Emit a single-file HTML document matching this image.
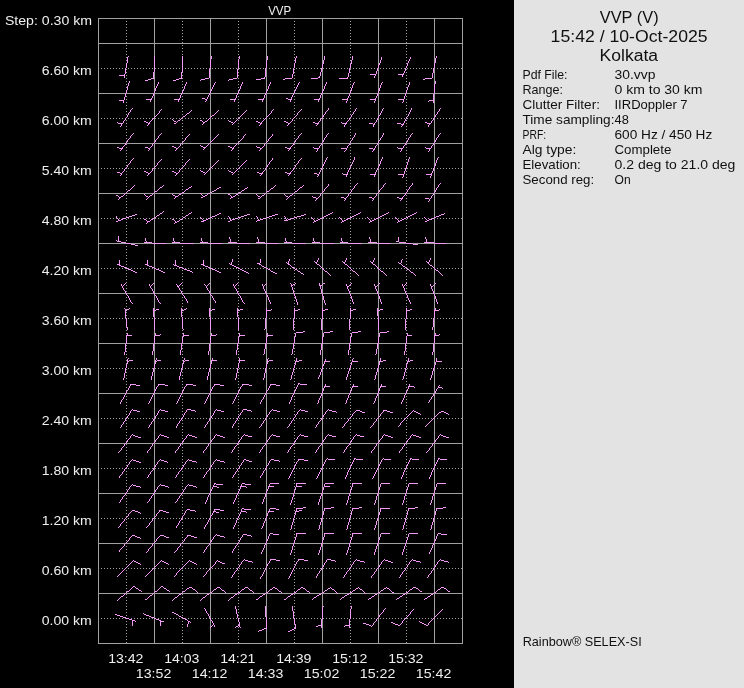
<!DOCTYPE html><html><head><meta charset="utf-8"><style>html,body{margin:0;padding:0;background:#000;width:744px;height:688px;overflow:hidden}svg{display:block;will-change:transform}text{font-family:"Liberation Sans",sans-serif}</style></head><body>
<svg width="744" height="688" viewBox="0 0 744 688">
<rect x="0" y="0" width="744" height="688" fill="#000"/>
<rect x="514" y="0" width="230" height="688" fill="#e3e3e3"/>
<g shape-rendering="crispEdges"><line x1="101" y1="68.5" x2="462" y2="68.5" stroke="#a0a0a0" stroke-width="1" stroke-dasharray="1 2"/><line x1="101" y1="118.5" x2="462" y2="118.5" stroke="#a0a0a0" stroke-width="1" stroke-dasharray="1 2"/><line x1="101" y1="168.5" x2="462" y2="168.5" stroke="#a0a0a0" stroke-width="1" stroke-dasharray="1 2"/><line x1="101" y1="218.5" x2="462" y2="218.5" stroke="#a0a0a0" stroke-width="1" stroke-dasharray="1 2"/><line x1="101" y1="268.5" x2="462" y2="268.5" stroke="#a0a0a0" stroke-width="1" stroke-dasharray="1 2"/><line x1="101" y1="318.5" x2="462" y2="318.5" stroke="#a0a0a0" stroke-width="1" stroke-dasharray="1 2"/><line x1="101" y1="368.5" x2="462" y2="368.5" stroke="#a0a0a0" stroke-width="1" stroke-dasharray="1 2"/><line x1="101" y1="418.5" x2="462" y2="418.5" stroke="#a0a0a0" stroke-width="1" stroke-dasharray="1 2"/><line x1="101" y1="468.5" x2="462" y2="468.5" stroke="#a0a0a0" stroke-width="1" stroke-dasharray="1 2"/><line x1="101" y1="518.5" x2="462" y2="518.5" stroke="#a0a0a0" stroke-width="1" stroke-dasharray="1 2"/><line x1="101" y1="568.5" x2="462" y2="568.5" stroke="#a0a0a0" stroke-width="1" stroke-dasharray="1 2"/><line x1="101" y1="618.5" x2="462" y2="618.5" stroke="#a0a0a0" stroke-width="1" stroke-dasharray="1 2"/><line x1="126.5" y1="21" x2="126.5" y2="643" stroke="#a0a0a0" stroke-width="1" stroke-dasharray="1 2"/><line x1="182.5" y1="21" x2="182.5" y2="643" stroke="#a0a0a0" stroke-width="1" stroke-dasharray="1 2"/><line x1="238.5" y1="21" x2="238.5" y2="643" stroke="#a0a0a0" stroke-width="1" stroke-dasharray="1 2"/><line x1="294.5" y1="21" x2="294.5" y2="643" stroke="#a0a0a0" stroke-width="1" stroke-dasharray="1 2"/><line x1="350.5" y1="21" x2="350.5" y2="643" stroke="#a0a0a0" stroke-width="1" stroke-dasharray="1 2"/><line x1="406.5" y1="21" x2="406.5" y2="643" stroke="#a0a0a0" stroke-width="1" stroke-dasharray="1 2"/><line x1="98" y1="43.5" x2="463" y2="43.5" stroke="#a0a0a0" stroke-width="1"/><line x1="98" y1="93.5" x2="463" y2="93.5" stroke="#a0a0a0" stroke-width="1"/><line x1="98" y1="143.5" x2="463" y2="143.5" stroke="#a0a0a0" stroke-width="1"/><line x1="98" y1="193.5" x2="463" y2="193.5" stroke="#a0a0a0" stroke-width="1"/><line x1="98" y1="243.5" x2="463" y2="243.5" stroke="#a0a0a0" stroke-width="1"/><line x1="98" y1="293.5" x2="463" y2="293.5" stroke="#a0a0a0" stroke-width="1"/><line x1="98" y1="343.5" x2="463" y2="343.5" stroke="#a0a0a0" stroke-width="1"/><line x1="98" y1="393.5" x2="463" y2="393.5" stroke="#a0a0a0" stroke-width="1"/><line x1="98" y1="443.5" x2="463" y2="443.5" stroke="#a0a0a0" stroke-width="1"/><line x1="98" y1="493.5" x2="463" y2="493.5" stroke="#a0a0a0" stroke-width="1"/><line x1="98" y1="543.5" x2="463" y2="543.5" stroke="#a0a0a0" stroke-width="1"/><line x1="98" y1="593.5" x2="463" y2="593.5" stroke="#a0a0a0" stroke-width="1"/><line x1="154.5" y1="18" x2="154.5" y2="643" stroke="#a0a0a0" stroke-width="1"/><line x1="210.5" y1="18" x2="210.5" y2="643" stroke="#a0a0a0" stroke-width="1"/><line x1="266.5" y1="18" x2="266.5" y2="643" stroke="#a0a0a0" stroke-width="1"/><line x1="322.5" y1="18" x2="322.5" y2="643" stroke="#a0a0a0" stroke-width="1"/><line x1="378.5" y1="18" x2="378.5" y2="643" stroke="#a0a0a0" stroke-width="1"/><line x1="434.5" y1="18" x2="434.5" y2="643" stroke="#a0a0a0" stroke-width="1"/><rect x="98.5" y="18.5" width="364" height="625" fill="none" stroke="#a0a0a0" stroke-width="1"/></g>
<text x="268.2" y="14.5" font-size="12.7" fill="#f0f0f0" textLength="23" lengthAdjust="spacingAndGlyphs" text-anchor="start">VVP</text><text x="4.9" y="25.1" font-size="12.7" fill="#f0f0f0" textLength="87.2" lengthAdjust="spacingAndGlyphs" text-anchor="start">Step: 0.30 km</text><text x="91.7" y="74.9" font-size="12.7" fill="#f0f0f0" textLength="50" lengthAdjust="spacingAndGlyphs" text-anchor="end">6.60 km</text><text x="91.7" y="124.9" font-size="12.7" fill="#f0f0f0" textLength="50" lengthAdjust="spacingAndGlyphs" text-anchor="end">6.00 km</text><text x="91.7" y="174.9" font-size="12.7" fill="#f0f0f0" textLength="50" lengthAdjust="spacingAndGlyphs" text-anchor="end">5.40 km</text><text x="91.7" y="224.9" font-size="12.7" fill="#f0f0f0" textLength="50" lengthAdjust="spacingAndGlyphs" text-anchor="end">4.80 km</text><text x="91.7" y="274.9" font-size="12.7" fill="#f0f0f0" textLength="50" lengthAdjust="spacingAndGlyphs" text-anchor="end">4.20 km</text><text x="91.7" y="324.9" font-size="12.7" fill="#f0f0f0" textLength="50" lengthAdjust="spacingAndGlyphs" text-anchor="end">3.60 km</text><text x="91.7" y="374.9" font-size="12.7" fill="#f0f0f0" textLength="50" lengthAdjust="spacingAndGlyphs" text-anchor="end">3.00 km</text><text x="91.7" y="424.9" font-size="12.7" fill="#f0f0f0" textLength="50" lengthAdjust="spacingAndGlyphs" text-anchor="end">2.40 km</text><text x="91.7" y="474.9" font-size="12.7" fill="#f0f0f0" textLength="50" lengthAdjust="spacingAndGlyphs" text-anchor="end">1.80 km</text><text x="91.7" y="524.9" font-size="12.7" fill="#f0f0f0" textLength="50" lengthAdjust="spacingAndGlyphs" text-anchor="end">1.20 km</text><text x="91.7" y="574.9" font-size="12.7" fill="#f0f0f0" textLength="50" lengthAdjust="spacingAndGlyphs" text-anchor="end">0.60 km</text><text x="91.7" y="624.9" font-size="12.7" fill="#f0f0f0" textLength="50" lengthAdjust="spacingAndGlyphs" text-anchor="end">0.00 km</text><text x="125.8" y="662.9" font-size="12.7" fill="#f0f0f0" textLength="35.3" lengthAdjust="spacingAndGlyphs" text-anchor="middle">13:42</text><text x="181.8" y="662.9" font-size="12.7" fill="#f0f0f0" textLength="35.3" lengthAdjust="spacingAndGlyphs" text-anchor="middle">14:03</text><text x="237.8" y="662.9" font-size="12.7" fill="#f0f0f0" textLength="35.3" lengthAdjust="spacingAndGlyphs" text-anchor="middle">14:21</text><text x="293.8" y="662.9" font-size="12.7" fill="#f0f0f0" textLength="35.3" lengthAdjust="spacingAndGlyphs" text-anchor="middle">14:39</text><text x="349.8" y="662.9" font-size="12.7" fill="#f0f0f0" textLength="35.3" lengthAdjust="spacingAndGlyphs" text-anchor="middle">15:12</text><text x="405.8" y="662.9" font-size="12.7" fill="#f0f0f0" textLength="35.3" lengthAdjust="spacingAndGlyphs" text-anchor="middle">15:32</text><text x="153.6" y="677.7" font-size="12.7" fill="#f0f0f0" textLength="35.5" lengthAdjust="spacingAndGlyphs" text-anchor="middle">13:52</text><text x="209.6" y="677.7" font-size="12.7" fill="#f0f0f0" textLength="35.5" lengthAdjust="spacingAndGlyphs" text-anchor="middle">14:12</text><text x="265.6" y="677.7" font-size="12.7" fill="#f0f0f0" textLength="35.5" lengthAdjust="spacingAndGlyphs" text-anchor="middle">14:33</text><text x="321.6" y="677.7" font-size="12.7" fill="#f0f0f0" textLength="35.5" lengthAdjust="spacingAndGlyphs" text-anchor="middle">15:02</text><text x="377.6" y="677.7" font-size="12.7" fill="#f0f0f0" textLength="35.5" lengthAdjust="spacingAndGlyphs" text-anchor="middle">15:22</text><text x="433.6" y="677.7" font-size="12.7" fill="#f0f0f0" textLength="35.5" lengthAdjust="spacingAndGlyphs" text-anchor="middle">15:42</text><text x="629.2" y="22.9" font-size="15.6" fill="#101010" textLength="58.8" lengthAdjust="spacingAndGlyphs" text-anchor="middle">VVP (V)</text><text x="629.1" y="41.8" font-size="15.6" fill="#101010" textLength="157" lengthAdjust="spacingAndGlyphs" text-anchor="middle">15:42 / 10-Oct-2025</text><text x="628.8" y="60.5" font-size="15.6" fill="#101010" textLength="58.5" lengthAdjust="spacingAndGlyphs" text-anchor="middle">Kolkata</text><text x="522.5" y="79" font-size="12.7" fill="#101010" textLength="45.0" lengthAdjust="spacingAndGlyphs" text-anchor="start">Pdf File:</text><text x="614.5" y="79" font-size="12.7" fill="#101010" textLength="40.9" lengthAdjust="spacingAndGlyphs" text-anchor="start">30.vvp</text><text x="522.5" y="94" font-size="12.7" fill="#101010" textLength="40.6" lengthAdjust="spacingAndGlyphs" text-anchor="start">Range:</text><text x="614.5" y="94" font-size="12.7" fill="#101010" textLength="88.0" lengthAdjust="spacingAndGlyphs" text-anchor="start">0 km to 30 km</text><text x="522.5" y="109" font-size="12.7" fill="#101010" textLength="77.4" lengthAdjust="spacingAndGlyphs" text-anchor="start">Clutter Filter:</text><text x="614.5" y="109" font-size="12.7" fill="#101010" textLength="73.1" lengthAdjust="spacingAndGlyphs" text-anchor="start">IIRDoppler 7</text><text x="522.5" y="124" font-size="12.7" fill="#101010" textLength="92.0" lengthAdjust="spacingAndGlyphs" text-anchor="start">Time sampling:</text><text x="614.5" y="124" font-size="12.7" fill="#101010" textLength="14.3" lengthAdjust="spacingAndGlyphs" text-anchor="start">48</text><text x="522.5" y="139" font-size="12.7" fill="#101010" textLength="23.6" lengthAdjust="spacingAndGlyphs" text-anchor="start">PRF:</text><text x="614.5" y="139" font-size="12.7" fill="#101010" textLength="97.8" lengthAdjust="spacingAndGlyphs" text-anchor="start">600 Hz / 450 Hz</text><text x="522.5" y="154" font-size="12.7" fill="#101010" textLength="53.8" lengthAdjust="spacingAndGlyphs" text-anchor="start">Alg type:</text><text x="614.5" y="154" font-size="12.7" fill="#101010" textLength="56.8" lengthAdjust="spacingAndGlyphs" text-anchor="start">Complete</text><text x="522.5" y="169" font-size="12.7" fill="#101010" textLength="58.3" lengthAdjust="spacingAndGlyphs" text-anchor="start">Elevation:</text><text x="614.5" y="169" font-size="12.7" fill="#101010" textLength="120.9" lengthAdjust="spacingAndGlyphs" text-anchor="start">0.2 deg to 21.0 deg</text><text x="522.5" y="184" font-size="12.7" fill="#101010" textLength="71.7" lengthAdjust="spacingAndGlyphs" text-anchor="start">Second reg:</text><text x="614.5" y="184" font-size="12.7" fill="#101010" textLength="16.1" lengthAdjust="spacingAndGlyphs" text-anchor="start">On</text><text x="522.7" y="646.3" font-size="12.7" fill="#101010" textLength="119" lengthAdjust="spacingAndGlyphs" text-anchor="start">Rainbow® SELEX-SI</text>
<path d="M128.2 56.1L124.3 78.1M124.8 75.1l-5.4 0.8M154.3 56.0L153.9 78.2M153.9 78.2l-8.6 2.6M182.3 56.0L181.9 78.2M181.9 78.2l-8.6 2.6M211.3 56.0L209.0 78.2M209.0 78.2l-8.8 1.9M239.3 56.0L237.0 78.2M237.0 78.2l-8.8 1.9M267.5 56.0L264.8 78.2M264.8 78.2l-8.8 1.7M296.3 56.2L292.2 78.1M292.2 78.1l-8.9 1.2M325.0 56.3L319.6 77.9M319.6 77.9l-9.0 0.6M352.8 56.3L347.8 78.0M347.8 78.0l-9.0 0.8M382.2 56.7L374.6 77.6M375.6 74.8l-5.5 -0.2M410.8 56.9L402.1 77.4M403.2 74.7l-5.5 -0.5M436.4 56.2L432.1 78.1M432.1 78.1l-8.9 1.1M129.4 81.4L123.2 102.9M124.1 100.0l-5.5 0.2M158.8 81.9L150.1 102.4M151.2 99.7l-5.5 -0.5M187.0 82.0L177.9 102.4M179.1 99.6l-5.5 -0.6M215.4 82.2L205.6 102.2M206.9 99.5l-5.4 -0.8M243.0 82.0L233.9 102.4M235.1 99.6l-5.5 -0.6M271.0 82.0L261.9 102.4M263.1 99.6l-5.5 -0.6M299.3 82.1L289.7 102.3M291.0 99.5l-5.5 -0.7M327.0 82.0L317.9 102.4M319.1 99.6l-5.5 -0.6M354.4 81.8L346.4 102.6M347.5 99.8l-5.5 -0.3M382.4 81.8L374.4 102.6M375.5 99.8l-5.5 -0.3M410.1 81.6L402.6 102.7M403.6 99.8l-5.5 -0.1M435.3 81.0L433.0 103.2M433.3 100.2l-5.4 1.1M132.6 107.9L120.5 126.6M122.1 124.1l-5.3 -1.4M162.1 109.1L147.2 125.6M149.2 123.4l-5.0 -2.2M191.6 110.6L174.0 124.3M176.4 122.5l-4.6 -3.1M219.2 110.1L202.4 124.7M204.6 122.8l-4.7 -2.8M246.6 109.5L230.8 125.3M233.0 123.1l-4.9 -2.5M274.1 109.1L259.2 125.6M261.2 123.4l-5.0 -2.2M301.8 108.8L287.5 125.9M289.4 123.6l-5.1 -2.1M329.1 108.2L316.1 126.3M317.9 123.9l-5.2 -1.7M356.8 108.0L344.3 126.5M346.0 124.0l-5.3 -1.5M384.1 107.6L372.9 126.9M374.4 124.3l-5.4 -1.1M411.9 107.5L401.1 127.0M402.6 124.3l-5.4 -1.0M440.9 108.1L428.3 126.5M430.0 124.0l-5.3 -1.6M133.2 133.3L120.1 151.3M121.8 148.9l-5.2 -1.7M161.3 133.4L147.9 151.2M149.7 148.8l-5.2 -1.8M189.8 133.8L175.5 150.9M177.4 148.6l-5.1 -2.1M218.5 134.3L203.0 150.4M205.0 148.2l-4.9 -2.4M246.1 134.1L231.2 150.6M233.2 148.4l-5.0 -2.2M273.7 133.6L259.6 151.0M261.5 148.6l-5.1 -2.0M301.2 133.3L288.1 151.3M289.8 148.9l-5.2 -1.7M328.6 132.9L316.5 151.6M318.1 149.1l-5.3 -1.4M356.4 132.7L344.7 151.8M346.3 149.2l-5.4 -1.3M384.3 132.7L372.8 151.8M374.3 149.2l-5.4 -1.2M412.6 132.9L400.5 151.6M402.1 149.1l-5.3 -1.4M440.6 132.9L428.5 151.6M430.1 149.1l-5.3 -1.4M133.3 158.4L119.9 176.2M121.7 173.8l-5.2 -1.8M161.8 158.8L147.5 175.9M149.4 173.6l-5.1 -2.1M190.0 158.9L175.4 175.7M177.3 173.5l-5.1 -2.1M218.6 159.5L202.8 175.3M205.0 173.1l-4.9 -2.5M246.6 159.5L230.8 175.3M233.0 173.1l-4.9 -2.5M273.0 158.1L260.2 176.4M261.9 173.9l-5.3 -1.6M301.2 158.3L288.1 176.3M289.8 173.9l-5.2 -1.7M327.4 157.2L317.6 177.2M318.9 174.5l-5.4 -0.8M355.2 157.1L345.7 177.3M347.0 174.6l-5.5 -0.7M383.0 157.0L373.8 177.3M375.1 174.6l-5.5 -0.6M410.0 156.6L402.7 177.7M403.7 174.9l-5.5 -0.1M438.4 156.8L430.4 177.6M431.5 174.8l-5.5 -0.3M135.3 185.2L118.3 199.7M120.6 197.7l-4.7 -2.9M163.5 185.4L146.1 199.5M148.5 197.6l-4.6 -3.0M192.0 186.2L173.7 198.8M176.1 197.1l-4.4 -3.3M220.6 187.2L201.1 198.0M203.8 196.5l-4.0 -3.8M248.2 186.5L229.5 198.6M232.0 197.0l-4.3 -3.5M275.6 185.6L258.0 199.3M260.4 197.5l-4.6 -3.1M303.5 185.4L286.1 199.5M288.5 197.6l-4.6 -3.0M329.7 183.6L315.6 201.0M317.5 198.6l-5.1 -2.0M357.3 183.4L343.9 201.2M345.7 198.8l-5.2 -1.8M385.4 183.4L371.9 201.2M373.7 198.8l-5.2 -1.8M413.0 183.1L400.2 201.4M401.9 198.9l-5.3 -1.6M440.5 182.8L428.6 201.7M430.2 199.2l-5.3 -1.3M137.4 214.0L116.4 221.5M119.3 220.5l-3.4 -4.4M164.1 211.3L145.6 223.7M148.1 222.0l-4.3 -3.4M192.2 211.5L173.5 223.6M176.0 222.0l-4.3 -3.5M221.1 213.1L200.8 222.3M203.5 221.0l-3.7 -4.1M249.5 214.1L228.4 221.4M231.2 220.4l-3.3 -4.4M277.6 214.3L256.3 221.2M259.2 220.3l-3.2 -4.4M305.6 214.5L284.3 221.0M287.2 220.2l-3.2 -4.5M332.9 212.6L312.9 222.6M315.6 221.3l-3.9 -3.9M360.9 212.6L340.9 222.6M343.6 221.3l-3.9 -3.9M388.8 212.6L369.0 222.7M371.6 221.3l-3.9 -3.9M416.8 212.6L397.0 222.7M399.6 221.3l-3.9 -3.9M445.2 213.3L424.7 222.0M427.4 220.9l-3.6 -4.2M137.9 245.6L116.1 240.9M119.0 241.6l-0.6 -5.5M166.1 243.5L143.9 242.7M146.9 242.8l-1.5 -5.3M194.1 243.5L171.9 242.7M174.9 242.8l-1.5 -5.3M222.1 243.5L199.9 242.7M202.9 242.8l-1.5 -5.3M250.1 243.7L227.9 242.5M230.9 242.7l-1.4 -5.3M278.1 243.7L255.9 242.5M258.9 242.7l-1.4 -5.3M306.1 243.5L283.9 242.7M286.9 242.8l-1.5 -5.3M334.1 243.5L311.9 242.7M314.9 242.8l-1.5 -5.3M362.1 243.5L339.9 242.7M342.9 242.8l-1.5 -5.3M390.1 243.7L367.9 242.5M370.9 242.7l-1.4 -5.3M418.0 244.7L395.9 241.6M398.9 242.0l-1.0 -5.4M446.1 243.9L423.9 242.3M426.9 242.5l-1.3 -5.3M137.2 272.8L116.7 264.1M119.4 265.2l0.5 -5.5M165.2 272.8L144.7 264.1M147.4 265.2l0.5 -5.5M193.3 272.5L172.6 264.3M175.4 265.4l0.3 -5.5M221.2 272.8L200.7 264.1M203.4 265.2l0.5 -5.5M248.9 273.5L228.9 263.5M231.6 264.8l0.8 -5.4M276.7 273.9L257.1 263.1M259.7 264.6l1.0 -5.4M304.0 274.9L285.6 262.3M288.1 264.0l1.6 -5.3M331.2 275.9L314.3 261.4M316.6 263.4l2.1 -5.1M359.2 276.0L342.4 261.4M344.6 263.3l2.1 -5.1M387.2 276.0L370.4 261.4M372.6 263.3l2.1 -5.1M415.8 275.3L397.9 262.0M400.3 263.7l1.8 -5.2M443.4 275.8L426.2 261.5M428.5 263.5l2.0 -5.1M132.1 303.5L120.9 284.2M122.4 286.8l3.7 -4.1M160.1 303.5L149.0 284.2M150.5 286.8l3.7 -4.1M188.5 303.3L176.6 284.4M178.2 286.9l3.5 -4.2M216.3 303.4L204.8 284.3M206.3 286.9l3.6 -4.2M244.1 303.5L233.0 284.2M234.5 286.8l3.7 -4.1M271.0 304.1L261.8 283.8M263.1 286.5l4.1 -3.7M298.0 304.5L290.7 283.4M291.7 286.2l4.4 -3.3M325.5 304.7L319.2 283.3M320.0 286.1l4.5 -3.1M354.4 304.3L346.4 283.5M347.5 286.3l4.3 -3.5M382.4 304.3L374.4 283.5M375.5 286.3l4.3 -3.5M410.8 304.2L402.1 283.7M403.2 286.4l4.2 -3.6M438.4 304.3L430.4 283.5M431.5 286.3l4.3 -3.5M127.4 330.1L124.9 307.9M125.2 310.9l5.0 -2.3M154.7 330.1L153.5 307.9M153.7 310.9l5.1 -2.0M183.1 330.1L181.2 307.9M181.4 310.9l5.1 -2.1M210.7 330.1L209.5 307.9M209.7 310.9l5.1 -2.0M238.3 330.1L237.8 307.9M237.9 310.9l5.2 -1.8M264.9 330.1L267.0 307.9M266.8 310.9l5.4 -1.2M293.1 330.1L294.9 307.9M294.6 310.9l5.4 -1.3M321.8 330.1L322.2 307.9M322.2 310.9l5.3 -1.6M349.8 330.1L350.2 307.9M350.2 310.9l5.3 -1.6M378.5 330.1L377.7 307.9M377.8 310.9l5.2 -1.9M405.4 330.1L406.6 307.9M406.4 310.9l5.3 -1.4M432.7 330.1L435.2 307.9M434.9 310.9l5.4 -1.1M124.6 355.1L127.3 332.9M126.9 335.9l5.4 -1.0M152.4 355.0L155.5 332.9M155.1 335.9l5.4 -1.0M180.2 355.0L183.6 333.0M183.2 335.9l5.4 -0.9M208.4 355.0L211.5 332.9M211.1 335.9l5.4 -1.0M236.2 355.0L239.6 333.0M239.2 335.9l5.4 -0.9M263.9 355.0L267.8 333.0M267.3 336.0l5.4 -0.8M291.9 355.0L295.8 333.0M295.8 333.0l8.9 -1.3M320.3 355.0L323.6 333.0M323.6 333.0l8.9 -1.5M348.2 355.0L351.6 333.0M351.6 333.0l8.9 -1.4M375.9 355.0L379.8 333.0M379.8 333.0l8.9 -1.3M404.4 355.0L407.4 332.9M407.0 335.9l5.4 -1.0M432.7 355.1L435.2 332.9M434.9 335.9l5.4 -1.1M123.5 379.9L128.2 358.1M127.5 361.0l5.5 -0.6M151.1 379.8L156.5 358.2M155.8 361.1l5.5 -0.4M179.1 379.8L184.5 358.2M183.8 361.1l5.5 -0.4M207.2 379.8L212.4 358.1M211.7 361.0l5.5 -0.4M235.7 379.9L240.0 358.0M239.4 361.0l5.5 -0.7M263.5 379.9L268.2 358.1M267.5 361.0l5.5 -0.6M290.7 379.7L296.9 358.2M296.0 361.1l5.5 -0.2M317.9 379.4L325.5 358.5M324.5 361.3l5.5 0.2M346.3 379.6L353.2 358.3M352.3 361.2l5.5 0.0M374.7 379.7L380.9 358.2M380.0 361.1l5.5 -0.2M402.9 379.7L408.7 358.2M407.9 361.1l5.5 -0.3M430.5 379.6L437.0 358.3M436.2 361.2l5.5 -0.1M120.2 403.6L131.0 384.1M131.0 384.1l8.8 1.7M148.4 403.8L158.8 384.0M158.8 384.0l8.9 1.5M176.4 403.8L186.8 384.0M186.8 384.0l8.9 1.5M204.4 403.7L214.8 384.0M214.8 384.0l8.9 1.6M232.4 403.8L242.8 384.0M242.8 384.0l8.9 1.5M260.2 403.6L271.0 384.1M271.0 384.1l8.8 1.7M288.9 404.0L298.4 383.8M298.4 383.8l8.9 1.1M317.4 404.2L326.0 383.6M324.8 386.4l5.5 0.4M345.3 404.2L354.0 383.7M352.9 386.4l5.5 0.5M373.5 404.3L381.9 383.6M380.7 386.4l5.5 0.4M401.1 404.1L410.2 383.7M409.0 386.5l5.5 0.6M427.5 403.2L439.5 384.5M437.9 387.0l5.3 1.4M119.5 428.2L131.6 409.5M131.6 409.5l8.7 2.3M147.5 428.2L159.6 409.5M159.6 409.5l8.7 2.3M175.6 428.3L187.5 409.4M187.5 409.4l8.7 2.2M203.5 428.2L215.6 409.5M215.6 409.5l8.7 2.3M231.5 428.3L243.5 409.4M243.5 409.4l8.7 2.3M259.3 428.1L271.7 409.6M271.7 409.6l8.7 2.4M287.3 428.1L299.7 409.6M299.7 409.6l8.7 2.4M315.1 428.0L327.9 409.7M327.9 409.7l8.6 2.6M342.4 427.5L356.5 410.1M356.5 410.1l8.4 3.2M370.6 427.6L384.3 410.0M384.3 410.0l8.5 3.1M397.8 426.9L413.0 410.6M413.0 410.6l8.2 3.8M425.2 426.3L441.5 411.1M441.5 411.1l7.9 4.4M118.8 452.7L132.2 434.9M132.2 434.9l8.5 2.9M146.9 452.8L160.0 434.8M160.0 434.8l8.6 2.8M174.9 452.8L188.0 434.8M188.0 434.8l8.6 2.8M202.9 452.8L216.0 434.8M216.0 434.8l8.6 2.8M231.2 453.0L243.8 434.6M243.8 434.6l8.6 2.6M259.2 453.0L271.8 434.6M271.8 434.6l8.6 2.6M287.2 453.0L299.8 434.6M299.8 434.6l8.6 2.6M315.2 453.0L327.8 434.6M327.8 434.6l8.6 2.6M343.2 453.0L355.8 434.6M355.8 434.6l8.6 2.6M370.9 452.8L384.0 434.8M384.0 434.8l8.6 2.8M398.9 452.8L412.0 434.8M412.0 434.8l8.6 2.8M426.8 452.7L440.2 434.9M440.2 434.9l8.5 2.9M119.0 477.9L132.0 459.7M132.0 459.7l8.6 2.7M147.2 478.0L159.8 459.7M159.8 459.7l8.6 2.6M175.1 478.0L187.9 459.7M187.9 459.7l8.6 2.6M203.1 478.0L215.9 459.7M215.9 459.7l8.6 2.6M231.4 478.1L243.7 459.5M243.7 459.5l8.7 2.4M259.8 478.4L271.3 459.3M271.3 459.3l8.8 2.0M288.4 478.7L298.8 459.0M298.8 459.0l8.9 1.6M316.7 478.9L326.5 458.9M326.5 458.9l8.9 1.3M344.9 479.0L354.4 458.8M354.4 458.8l8.9 1.1M372.7 478.9L382.5 458.9M382.5 458.9l8.9 1.3M400.9 479.0L410.4 458.8M410.4 458.8l8.9 1.1M428.9 479.0L438.4 458.8M438.4 458.8l8.9 1.1M119.1 503.0L131.9 484.7M131.9 484.7l8.6 2.6M147.3 503.1L159.8 484.6M159.8 484.6l8.7 2.5M175.3 503.1L187.8 484.6M187.8 484.6l8.7 2.5M204.9 504.0L214.4 483.8M214.4 483.8l8.9 1.1M213.1 486.5l5.5 0.7M233.1 504.1L242.2 483.7M242.2 483.7l9.0 0.9M241.0 486.5l5.5 0.6M261.7 504.3L269.7 483.5M269.7 483.5l9.0 0.5M268.6 486.3l5.5 0.3M290.6 504.6L297.0 483.3M297.0 483.3l9.0 -0.2M296.1 486.2l5.5 -0.1M318.3 504.6L325.2 483.3M325.2 483.3l9.0 0.0M324.3 486.2l5.5 0.0M346.5 504.6L353.0 483.3M353.0 483.3l9.0 -0.2M374.4 504.6L381.2 483.3M381.2 483.3l9.0 -0.0M402.4 504.6L409.2 483.3M409.2 483.3l9.0 -0.0M430.4 504.6L437.2 483.3M437.2 483.3l9.0 -0.0M118.5 527.5L132.4 510.1M132.4 510.1l8.4 3.1M146.6 527.6L160.3 510.0M160.3 510.0l8.5 3.1M175.8 528.4L187.3 509.3M187.3 509.3l8.8 2.0M204.2 528.7L215.0 509.1M215.0 509.1l8.8 1.7M213.5 511.7l5.4 1.0M233.0 529.1L242.3 508.8M242.3 508.8l8.9 1.0M241.0 511.5l5.5 0.6M261.5 529.3L269.9 508.6M269.9 508.6l9.0 0.6M268.7 511.4l5.5 0.4M290.7 529.7L296.9 508.2M296.9 508.2l9.0 -0.3M296.0 511.1l5.5 -0.2M318.7 529.7L324.9 508.2M324.9 508.2l9.0 -0.3M346.7 529.7L352.9 508.2M352.9 508.2l9.0 -0.3M374.5 529.6L381.0 508.3M381.0 508.3l9.0 -0.2M402.7 529.7L408.9 508.2M408.9 508.2l9.0 -0.3M430.7 529.7L436.9 508.2M436.9 508.2l9.0 -0.3M118.3 552.4L132.6 535.2M132.6 535.2l8.4 3.3M146.4 552.5L160.5 535.1M160.5 535.1l8.4 3.2M174.6 552.6L188.3 535.0M188.3 535.0l8.5 3.1M203.1 553.0L215.9 534.7M215.9 534.7l8.6 2.6M231.6 553.3L243.5 534.4M243.5 534.4l8.7 2.2M261.1 554.1L270.2 533.7M270.2 533.7l9.0 0.9M290.5 554.6L297.0 533.3M297.0 533.3l9.0 -0.2M318.6 554.6L325.0 533.3M325.0 533.3l9.0 -0.2M346.6 554.6L353.0 533.3M353.0 533.3l9.0 -0.2M374.3 554.6L381.2 533.3M381.2 533.3l9.0 0.0M402.2 554.5L409.3 533.4M409.3 533.4l9.0 0.1M429.1 554.1L438.2 533.7M438.2 533.7l9.0 0.9M117.6 576.8L133.1 560.7M133.1 560.7l8.1 3.9M145.7 576.8L161.1 560.7M161.1 560.7l8.1 3.9M173.8 576.9L189.0 560.6M189.0 560.6l8.2 3.8M202.0 577.0L216.9 560.5M216.9 560.5l8.2 3.7M231.1 578.0L243.9 559.7M243.9 559.7l8.6 2.6M260.3 578.7L270.9 559.1M270.9 559.1l8.9 1.6M288.4 578.7L298.8 559.0M298.8 559.0l8.9 1.6M315.6 578.3L327.5 559.4M327.5 559.4l8.7 2.2M343.1 578.0L355.9 559.7M355.9 559.7l8.6 2.6M371.0 577.9L384.0 559.7M384.0 559.7l8.6 2.7M399.1 578.0L411.9 559.7M411.9 559.7l8.6 2.6M427.2 578.0L439.9 559.7M439.9 559.7l8.6 2.6M116.8 600.8L133.9 586.5M133.9 586.5l7.6 4.8M144.6 600.7L162.0 586.6M162.0 586.6l7.5 4.9M172.4 600.3L190.2 586.9M190.2 586.9l7.4 5.2M200.3 600.2L218.3 587.1M218.3 587.1l7.3 5.3M228.3 600.2L246.3 587.1M246.3 587.1l7.3 5.3M256.1 600.0L274.4 587.2M274.4 587.2l7.2 5.4M284.2 600.0L302.4 587.2M302.4 587.2l7.2 5.4M311.8 599.5L330.7 587.6M330.7 587.6l6.9 5.8M339.8 599.5L358.7 587.6M358.7 587.6l6.9 5.7M368.0 599.7L386.6 587.4M386.6 587.4l7.0 5.6M396.0 599.8L414.5 587.3M414.5 587.3l7.1 5.5M424.0 599.8L442.5 587.3M442.5 587.3l7.1 5.5M114.6 614.1L135.7 621.4M132.9 620.4l-0.1 5.5M142.8 613.6L163.5 621.8M160.8 620.7l-0.3 5.5M171.5 612.2L191.0 623.0M188.3 621.5l-1.0 5.4M204.0 607.6L215.2 626.9M213.7 624.3l-3.7 4.1M235.3 606.3L240.3 628.0M239.7 625.1l-4.7 2.8M265.4 606.0L266.6 628.2M266.6 628.2l-8.4 3.2M292.2 606.1L295.6 628.1M295.6 628.1l-8.0 4.0M323.1 606.0L321.2 628.2M321.4 625.2l-5.4 1.2M351.3 606.0L349.0 628.2M349.3 625.2l-5.4 1.1M385.4 608.4L371.9 626.2M371.9 626.2l-8.5 -3.0M414.0 609.0L399.3 625.7M399.3 625.7l-8.3 -3.6M442.3 609.2L427.1 625.5M427.1 625.5l-8.2 -3.8" stroke="#f59af8" stroke-width="0.99" fill="none" stroke-linecap="butt" shape-rendering="crispEdges"/>
</svg></body></html>
